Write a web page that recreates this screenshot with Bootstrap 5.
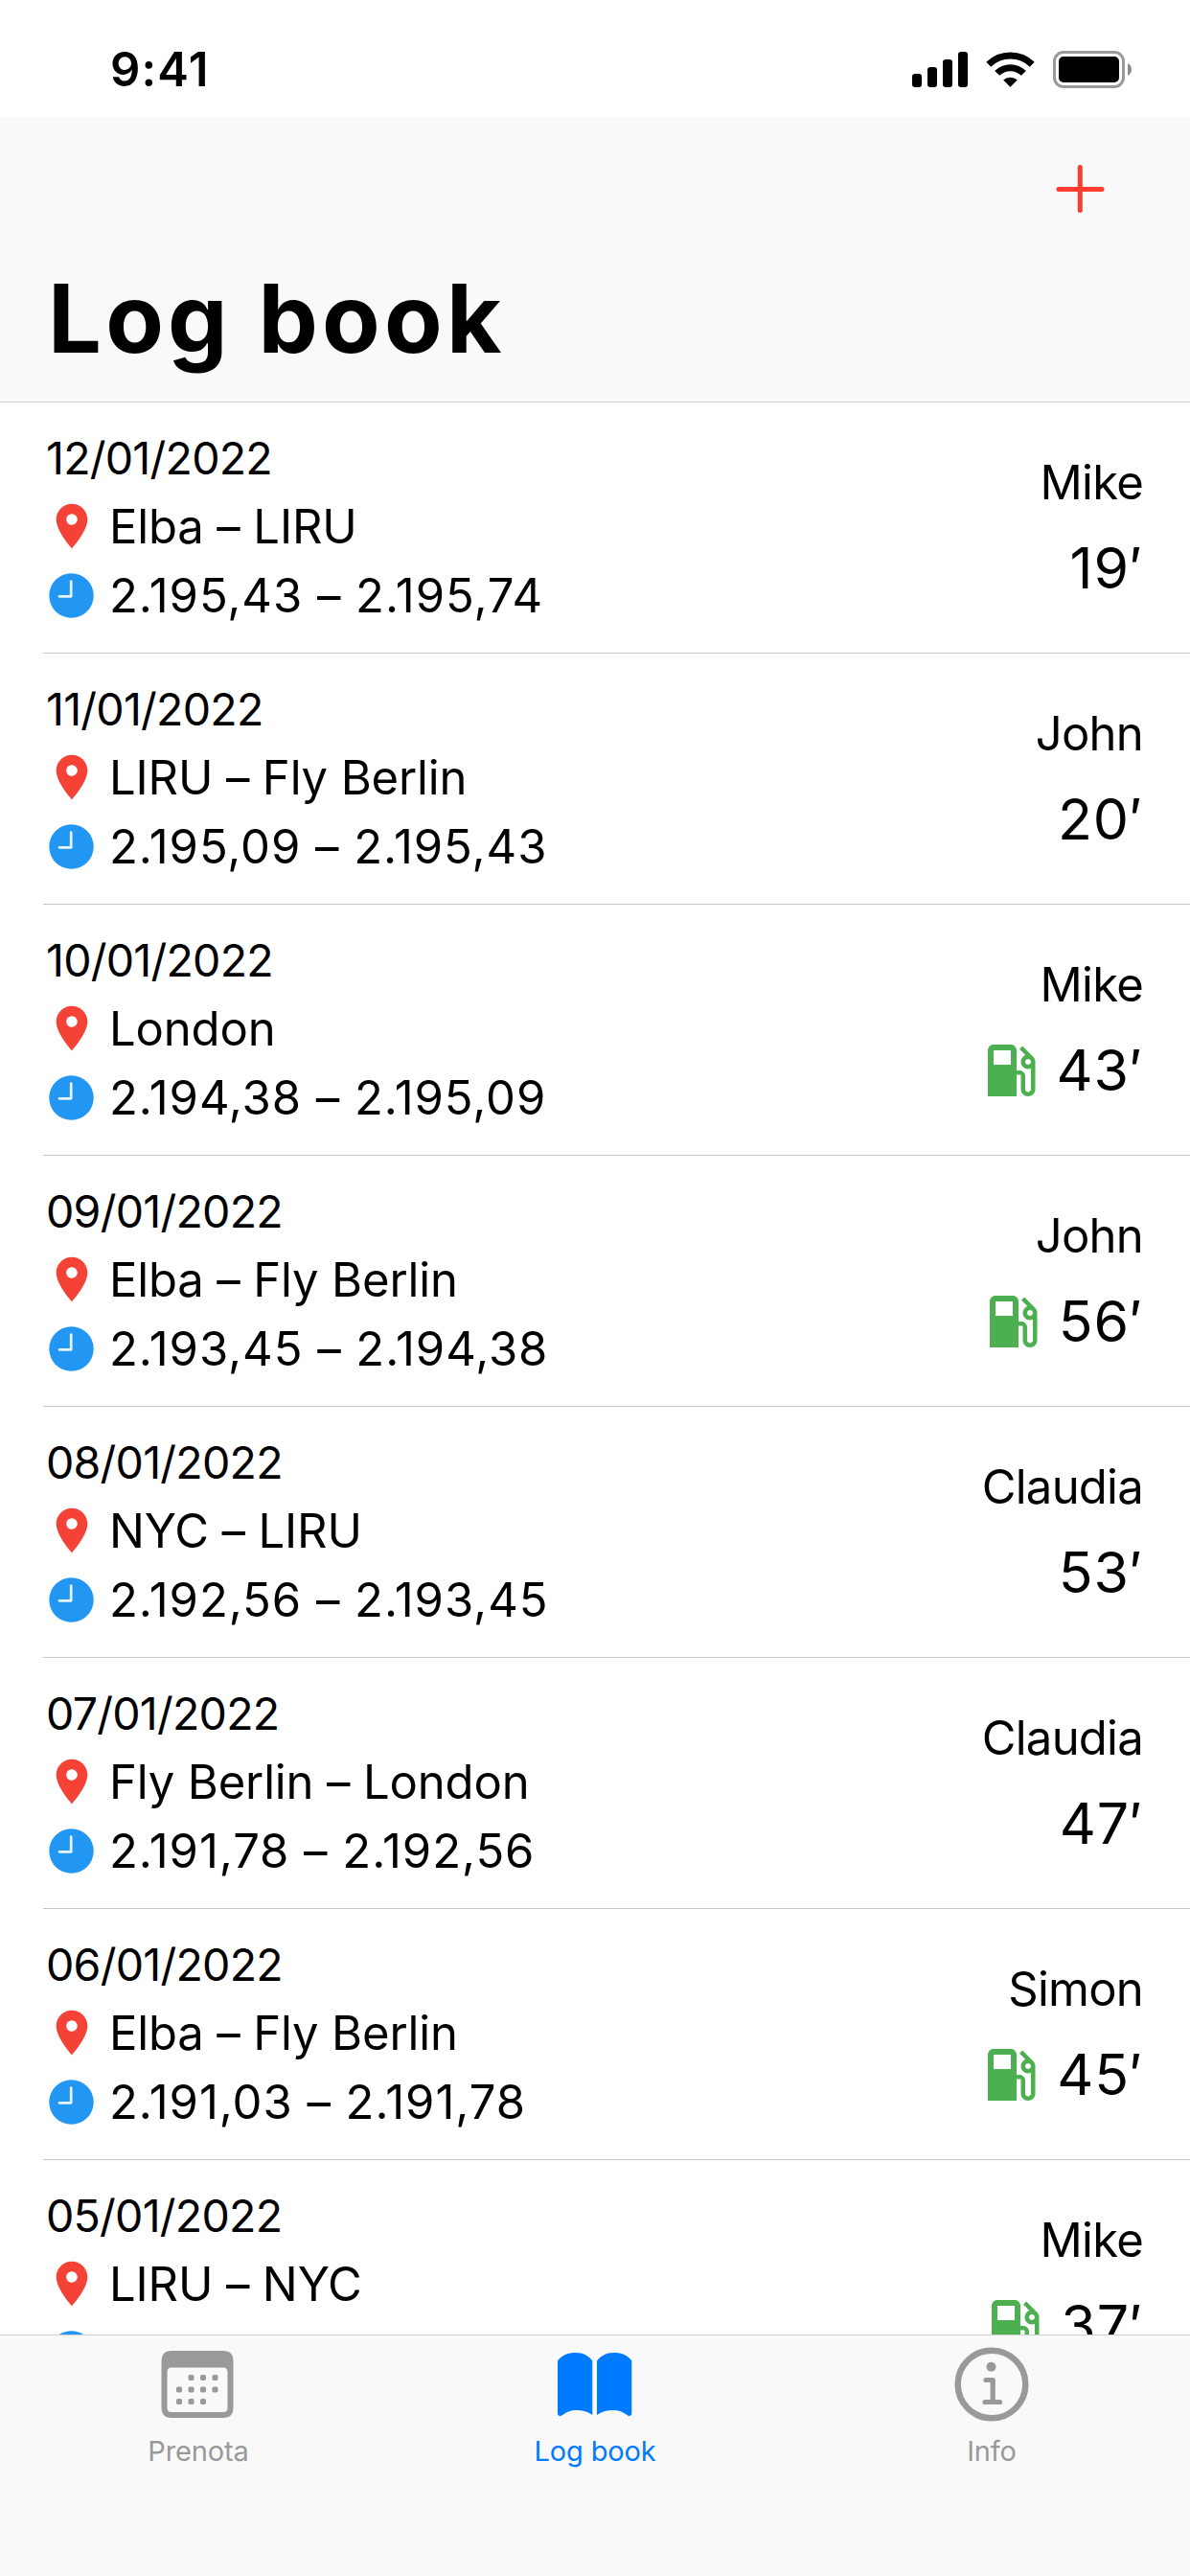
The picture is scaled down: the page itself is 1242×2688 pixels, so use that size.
<!DOCTYPE html>
<html lang="it">
<head>
<meta charset="utf-8">
<meta name="viewport" content="width=device-width, initial-scale=1">
<title>Log book</title>
<link href="https://cdn.jsdelivr.net/npm/bootstrap@5.3.0/dist/css/bootstrap.min.css" rel="stylesheet">
<style>
  body { width: 1242px; height: 2688px; font-family: Inter, "Liberation Sans", sans-serif; color: #000; background: #fff; }
  svg { display: block; flex: none; }
  .statusbar { height: 122px; padding: 0 60px 0 115px; }
  .clock-text { font-size: 49px; font-weight: 600; line-height: 60px; margin-top: 43px; letter-spacing: 1.2px; }
  .status-icons { margin-top: 52px; }
  .app-header { height: 298px; background: #f9f9f9; border-bottom: 1px solid #d0d0d0; }
  .add-btn { height: 150px; padding: 48px 88px 0 0; }
  .page-title { font-size: 99px; font-weight: 700; line-height: 120px; margin: 0 0 0 50px; letter-spacing: 4.2px; }
  .log-list { min-height: 0; }
  .log-row { height: 262px; margin-left: 45px; padding: 22px 49px 0 0; border-bottom: 1px solid #c8c8c8; }
  .log-line { height: 72px; font-size: 49px; line-height: 72px; white-space: nowrap; letter-spacing: -.15px; }
  .log-date { font-size: 46.5px; padding-left: 3px; letter-spacing: -.75px; }
  .log-hours { letter-spacing: .95px; }
  .log-icon { width: 69px; }
  .log-icon .pin { margin: 7px 0 0 2px; }
  .log-icon .dial { margin: 12px 0 0 6px; }
  .log-side { padding-top: 26px; }
  .log-name { letter-spacing: -.75px; }
  .log-time { height: 105px; font-size: 59px; line-height: 105px; gap: 12px; letter-spacing: .9px; }
  .tabbar { height: 252px; background: #f9f9f9; border-top: 1px solid #d0d0d0; }
  .tab-item { color: #999; font-size: 29px; line-height: 36px; padding-top: 11px; gap: 12px; letter-spacing: -.15px; }
  .tab-item.active { color: #007aff; }
</style>
</head>
<body class="d-flex flex-column overflow-hidden">
<svg width="0" height="0" class="position-absolute" aria-hidden="true">
  <symbol id="pin" viewBox="0 0 24 24"><path fill="#f44336" d="M12 2C8.13 2 5 5.13 5 9c0 5.25 7 13 7 13s7-7.75 7-13c0-3.87-3.13-7-7-7zm0 9.5a2.5 2.5 0 1 1 0-5 2.5 2.5 0 0 1 0 5z"/></symbol>
  <symbol id="dial" viewBox="0 0 47 47"><circle cx="23.5" cy="23.5" r="23.2" fill="#2196f3"/><path d="M23.2 8.5V24.3H11" fill="none" stroke="#e8f4fe" stroke-width="2.7" stroke-linecap="round" stroke-linejoin="round"/></symbol>
  <symbol id="fuel" viewBox="0 0 24 24"><path fill="#4caf50" d="M19.77 7.23l.01-.01-3.72-3.72L15 4.56l2.11 2.11c-.94.36-1.61 1.26-1.61 2.33 0 1.38 1.12 2.5 2.5 2.5.36 0 .69-.08 1-.21v7.21c0 .55-.45 1-1 1s-1-.45-1-1V14c0-1.1-.9-2-2-2h-1V5c0-1.1-.9-2-2-2H6c-1.1 0-2 .9-2 2v16h10v-7.5h1.5v5c0 1.38 1.12 2.5 2.5 2.5s2.5-1.12 2.5-2.5V9c0-.69-.28-1.32-.73-1.77zM12 10H6V5h6v5zm6 0c-.55 0-1-.45-1-1s.45-1 1-1 1 .45 1 1-.45 1-1 1z"/></symbol>
</svg>

<div class="statusbar d-flex justify-content-between align-items-start flex-shrink-0">
  <div class="clock-text">9:41</div>
  <svg class="status-icons" width="231" height="42" viewBox="951 52 231 42">
    <rect x="952" y="77" width="10" height="14" rx="3"/><rect x="968" y="70" width="10" height="21" rx="3"/>
    <rect x="984" y="62" width="10" height="29" rx="3"/><rect x="1000" y="54" width="10" height="37" rx="3"/>
    <path d="M1054.400 90.700L1047.200 83.600A10.500 10.500 0 0 1 1061.800 83.600Z"/>
    <path d="M1040.700 76.400A19.500 19.500 0 0 1 1068.300 76.400" fill="none" stroke="#000" stroke-width="7"/>
    <path d="M1031.800 67.200A32.500 32.500 0 0 1 1077.200 67.200" fill="none" stroke="#000" stroke-width="7"/>
    <rect x="1100.500" y="54.500" width="72" height="36" rx="9.500" fill="none" stroke="#999" stroke-width="3"/>
    <rect x="1105" y="59" width="63" height="27" rx="5"/>
    <path d="M1177 66.300Q1181 68 1181 72.500T1177 78.700Z" fill="#8c8c8c"/>
  </svg>
</div>

<header class="app-header flex-shrink-0">
  <div class="add-btn d-flex justify-content-end">
    <svg width="54" height="54" viewBox="0 0 54 54"><path d="M27.300 4.500V49.500M5 27.500H50" stroke="#ff3b30" stroke-width="5" stroke-linecap="round"/></svg>
  </div>
  <h1 class="page-title">Log book</h1>
</header>

<main class="log-list flex-grow-1 overflow-hidden">
  <div class="log-row d-flex justify-content-between">
    <div>
      <div class="log-line log-date">12/01/2022</div>
      <div class="log-line d-flex"><span class="log-icon"><svg class="pin" width="56" height="56"><use href="#pin"/></svg></span>Elba – LIRU</div>
      <div class="log-line log-hours d-flex"><span class="log-icon"><svg class="dial" width="47" height="47"><use href="#dial"/></svg></span>2.195,43 – 2.195,74</div>
    </div>
    <div class="log-side"><div class="log-line log-name text-end">Mike</div><div class="log-time d-flex justify-content-end align-items-center">19′</div></div>
  </div>
  <div class="log-row d-flex justify-content-between">
    <div>
      <div class="log-line log-date">11/01/2022</div>
      <div class="log-line d-flex"><span class="log-icon"><svg class="pin" width="56" height="56"><use href="#pin"/></svg></span>LIRU – Fly Berlin</div>
      <div class="log-line log-hours d-flex"><span class="log-icon"><svg class="dial" width="47" height="47"><use href="#dial"/></svg></span>2.195,09 – 2.195,43</div>
    </div>
    <div class="log-side"><div class="log-line log-name text-end">John</div><div class="log-time d-flex justify-content-end align-items-center">20′</div></div>
  </div>
  <div class="log-row d-flex justify-content-between">
    <div>
      <div class="log-line log-date">10/01/2022</div>
      <div class="log-line d-flex"><span class="log-icon"><svg class="pin" width="56" height="56"><use href="#pin"/></svg></span>London</div>
      <div class="log-line log-hours d-flex"><span class="log-icon"><svg class="dial" width="47" height="47"><use href="#dial"/></svg></span>2.194,38 – 2.195,09</div>
    </div>
    <div class="log-side"><div class="log-line log-name text-end">Mike</div><div class="log-time d-flex justify-content-end align-items-center"><svg width="72" height="72"><use href="#fuel"/></svg>43′</div></div>
  </div>
  <div class="log-row d-flex justify-content-between">
    <div>
      <div class="log-line log-date">09/01/2022</div>
      <div class="log-line d-flex"><span class="log-icon"><svg class="pin" width="56" height="56"><use href="#pin"/></svg></span>Elba – Fly Berlin</div>
      <div class="log-line log-hours d-flex"><span class="log-icon"><svg class="dial" width="47" height="47"><use href="#dial"/></svg></span>2.193,45 – 2.194,38</div>
    </div>
    <div class="log-side"><div class="log-line log-name text-end">John</div><div class="log-time d-flex justify-content-end align-items-center"><svg width="72" height="72"><use href="#fuel"/></svg>56′</div></div>
  </div>
  <div class="log-row d-flex justify-content-between">
    <div>
      <div class="log-line log-date">08/01/2022</div>
      <div class="log-line d-flex"><span class="log-icon"><svg class="pin" width="56" height="56"><use href="#pin"/></svg></span>NYC – LIRU</div>
      <div class="log-line log-hours d-flex"><span class="log-icon"><svg class="dial" width="47" height="47"><use href="#dial"/></svg></span>2.192,56 – 2.193,45</div>
    </div>
    <div class="log-side"><div class="log-line log-name text-end">Claudia</div><div class="log-time d-flex justify-content-end align-items-center">53′</div></div>
  </div>
  <div class="log-row d-flex justify-content-between">
    <div>
      <div class="log-line log-date">07/01/2022</div>
      <div class="log-line d-flex"><span class="log-icon"><svg class="pin" width="56" height="56"><use href="#pin"/></svg></span>Fly Berlin – London</div>
      <div class="log-line log-hours d-flex"><span class="log-icon"><svg class="dial" width="47" height="47"><use href="#dial"/></svg></span>2.191,78 – 2.192,56</div>
    </div>
    <div class="log-side"><div class="log-line log-name text-end">Claudia</div><div class="log-time d-flex justify-content-end align-items-center">47′</div></div>
  </div>
  <div class="log-row d-flex justify-content-between">
    <div>
      <div class="log-line log-date">06/01/2022</div>
      <div class="log-line d-flex"><span class="log-icon"><svg class="pin" width="56" height="56"><use href="#pin"/></svg></span>Elba – Fly Berlin</div>
      <div class="log-line log-hours d-flex"><span class="log-icon"><svg class="dial" width="47" height="47"><use href="#dial"/></svg></span>2.191,03 – 2.191,78</div>
    </div>
    <div class="log-side"><div class="log-line log-name text-end">Simon</div><div class="log-time d-flex justify-content-end align-items-center"><svg width="72" height="72"><use href="#fuel"/></svg>45′</div></div>
  </div>
  <div class="log-row d-flex justify-content-between">
    <div>
      <div class="log-line log-date">05/01/2022</div>
      <div class="log-line d-flex"><span class="log-icon"><svg class="pin" width="56" height="56"><use href="#pin"/></svg></span>LIRU – NYC</div>
      <div class="log-line log-hours d-flex"><span class="log-icon"><svg class="dial" width="47" height="47"><use href="#dial"/></svg></span></div>
    </div>
    <div class="log-side"><div class="log-line log-name text-end">Mike</div><div class="log-time d-flex justify-content-end align-items-center"><svg width="72" height="72"><use href="#fuel"/></svg>37′</div></div>
  </div>
</main>

<nav class="tabbar row g-0 flex-shrink-0">
  <div class="tab-item col d-flex flex-column align-items-center">
    <svg width="80" height="80" viewBox="0 0 80 80" fill="currentColor">
      <path fill-rule="evenodd" d="M12 5H66Q76.500 5 76.500 16V64Q76.500 75 66 75H12Q1.500 75 1.500 64V16Q1.500 5 12 5ZM12 22.500Q7.500 22.500 7.500 27V64.500Q7.500 69 12 69H66Q70.500 69 70.500 64.500V27Q70.500 22.500 66 22.500Z"/>
      <g><rect x="29.500" y="30" width="6" height="6" rx="1.800"/><rect x="42" y="30" width="6" height="6" rx="1.800"/><rect x="54.500" y="30" width="6" height="6" rx="1.800"/>
      <rect x="17" y="42.500" width="6" height="6" rx="1.800"/><rect x="29.500" y="42.500" width="6" height="6" rx="1.800"/><rect x="42" y="42.500" width="6" height="6" rx="1.800"/><rect x="54.500" y="42.500" width="6" height="6" rx="1.800"/>
      <rect x="17" y="55" width="6" height="6" rx="1.800"/><rect x="29.500" y="55" width="6" height="6" rx="1.800"/><rect x="42" y="55" width="6" height="6" rx="1.800"/></g>
    </svg>
    Prenota
  </div>
  <div class="tab-item active col d-flex flex-column align-items-center">
    <svg width="80" height="80" viewBox="0 0 80 80" fill="currentColor">
      <path d="M1 15.500C5 9.500 12 7 20 7S33 10 37.300 15.500V72C32 68 26 67 20.500 67C14.500 67 10.500 68.500 6.500 71.800C3.500 74 1 73 1 70Z"/>
      <path d="M78.300 15.500C74.500 9.500 67.500 7 59.500 7S46.500 10 42 15.500V72C47.500 68 53.500 67 59 67C65 67 69 68.500 73 71.800C76 74 78.300 73 78.300 70Z"/>
    </svg>
    Log book
  </div>
  <div class="tab-item col d-flex flex-column align-items-center">
    <svg width="80" height="80" viewBox="0 0 80 80" fill="none" stroke="currentColor">
      <circle cx="40" cy="40" r="35.300" stroke-width="6.500"/>
      <circle cx="39.500" cy="21.700" r="5" fill="currentColor" stroke="none"/>
      <path d="M34 35.500H41.200V58M33 58.500H48.500" stroke-width="5.200" stroke-linecap="round" stroke-linejoin="round"/>
    </svg>
    Info
  </div>
</nav>
<script src="https://cdn.jsdelivr.net/npm/bootstrap@5.3.0/dist/js/bootstrap.bundle.min.js"></script>
</body>
</html>
